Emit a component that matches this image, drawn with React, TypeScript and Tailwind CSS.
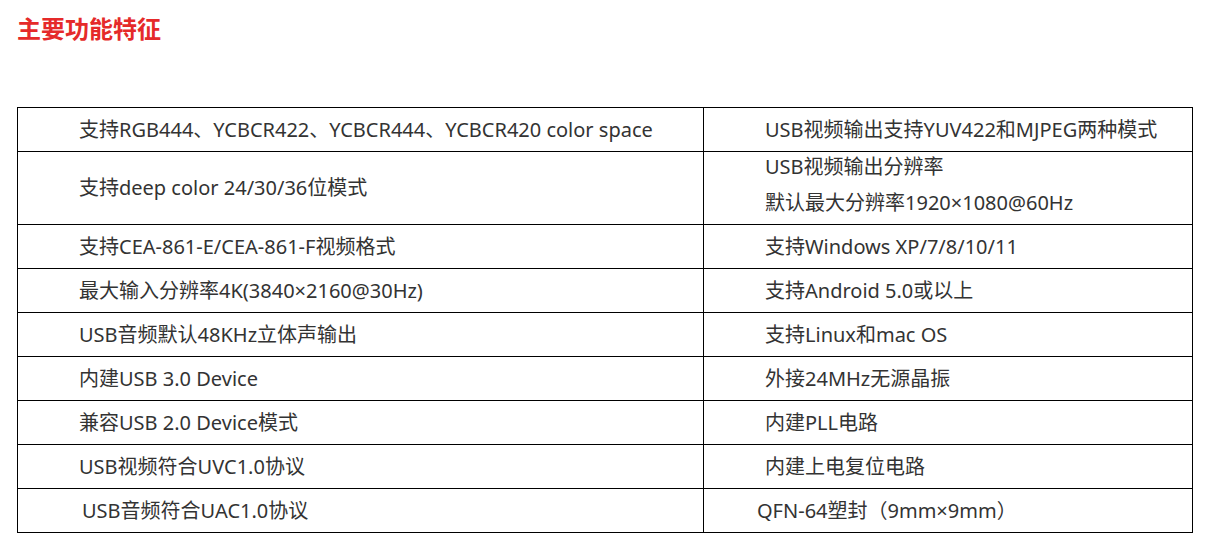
import React from "react";

const rows: { l: string; r: string[]; lp?: string; rp?: string; tall?: boolean }[] = [
  { l: "支持RGB444、YCBCR422、YCBCR444、YCBCR420 color space", r: ["USB视频输出支持YUV422和MJPEG两种模式"] },
  { l: "支持deep color 24/30/36位模式", r: ["USB视频输出分辨率", "默认最大分辨率1920×1080@60Hz"], tall: true },
  { l: "支持CEA-861-E/CEA-861-F视频格式", r: ["支持Windows XP/7/8/10/11"] },
  { l: "最大输入分辨率4K(3840×2160@30Hz)", r: ["支持Android 5.0或以上"] },
  { l: "USB音频默认48KHz立体声输出", r: ["支持Linux和mac OS"] },
  { l: "内建USB 3.0 Device", r: ["外接24MHz无源晶振"] },
  { l: "兼容USB 2.0 Device模式", r: ["内建PLL电路"] },
  { l: "USB视频符合UVC1.0协议", r: ["内建上电复位电路"] },
  { l: "USB音频符合UAC1.0协议", r: ["QFN-64塑封（9mm×9mm）"], lp: "pl-[64px]", rp: "pl-[53px]" },
];

export default function App() {
  return (
    <div
      className="w-[1210px] h-[553px] bg-white px-[17px] pt-[11px]"
      style={{ fontFamily: '"Noto Sans", "Noto Sans CJK SC", sans-serif' }}
    >
      <h1 className="text-[24px] leading-[34px] font-bold text-[#e52a2a]" style={{ fontFamily: '"Noto Sans CJK SC", sans-serif' }}>
        主要功能特征
      </h1>
      <div className="mt-[62px] w-[1176px] border border-black text-[20px] text-[#333333]">
        {rows.map((row, i) => (
          <div
            key={i}
            className={`grid grid-cols-[686px_1fr] ${i > 0 ? "border-t border-black" : ""} ${row.tall ? "h-[73px]" : i === 0 ? "h-[43px]" : "h-[44px]"}`}
          >
            <div className={`flex items-center border-r border-black ${row.lp ?? "pl-[61px]"}`}>{row.l}</div>
            <div className={`flex flex-col justify-center ${row.tall ? "gap-[6px] pb-[6px]" : ""} ${row.rp ?? "pl-[61px]"}`}>
              {row.r.map((t, j) => (
                <div key={j} className={row.r.length > 1 ? "leading-[30px]" : ""}>
                  {t}
                </div>
              ))}
            </div>
          </div>
        ))}
      </div>
    </div>
  );
}
